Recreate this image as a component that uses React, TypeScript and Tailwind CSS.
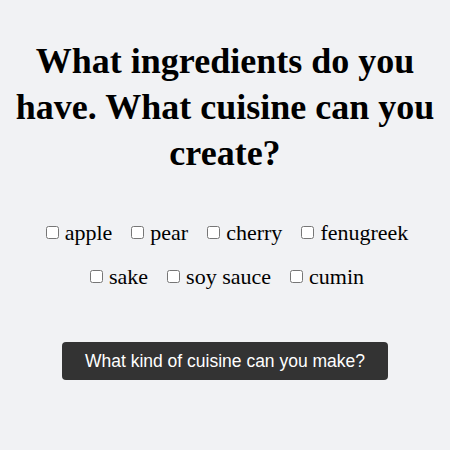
const items = ["apple", "pear", "cherry", "fenugreek", "sake", "soy sauce", "cumin"];

export default function App() {
  return (
    <div className="min-h-[450px] bg-[#f1f2f4] px-2 pt-[38px] text-center">
      <h1 className="text-[36px] font-bold leading-[46px] text-black [font-family:'Liberation_Serif',serif]">
        What ingredients do you have. What cuisine can you create?
      </h1>
      <div className="mx-auto mt-[34px] flex max-w-[400px] flex-wrap justify-center gap-x-[19px] pl-[4px] [font-family:'Liberation_Serif',serif]">
        {items.map((item) => (
          <label key={item} className="flex h-[44px] items-center text-[22px] text-black">
            <input type="checkbox" className="mr-[6px]" />
            {item}
          </label>
        ))}
      </div>
      <button className="mt-[44px] h-[38px] w-[326px] rounded-[4px] bg-[#333333] text-[17.5px] text-white [font-family:'Liberation_Sans',sans-serif]">
        What kind of cuisine can you make?
      </button>
    </div>
  );
}
